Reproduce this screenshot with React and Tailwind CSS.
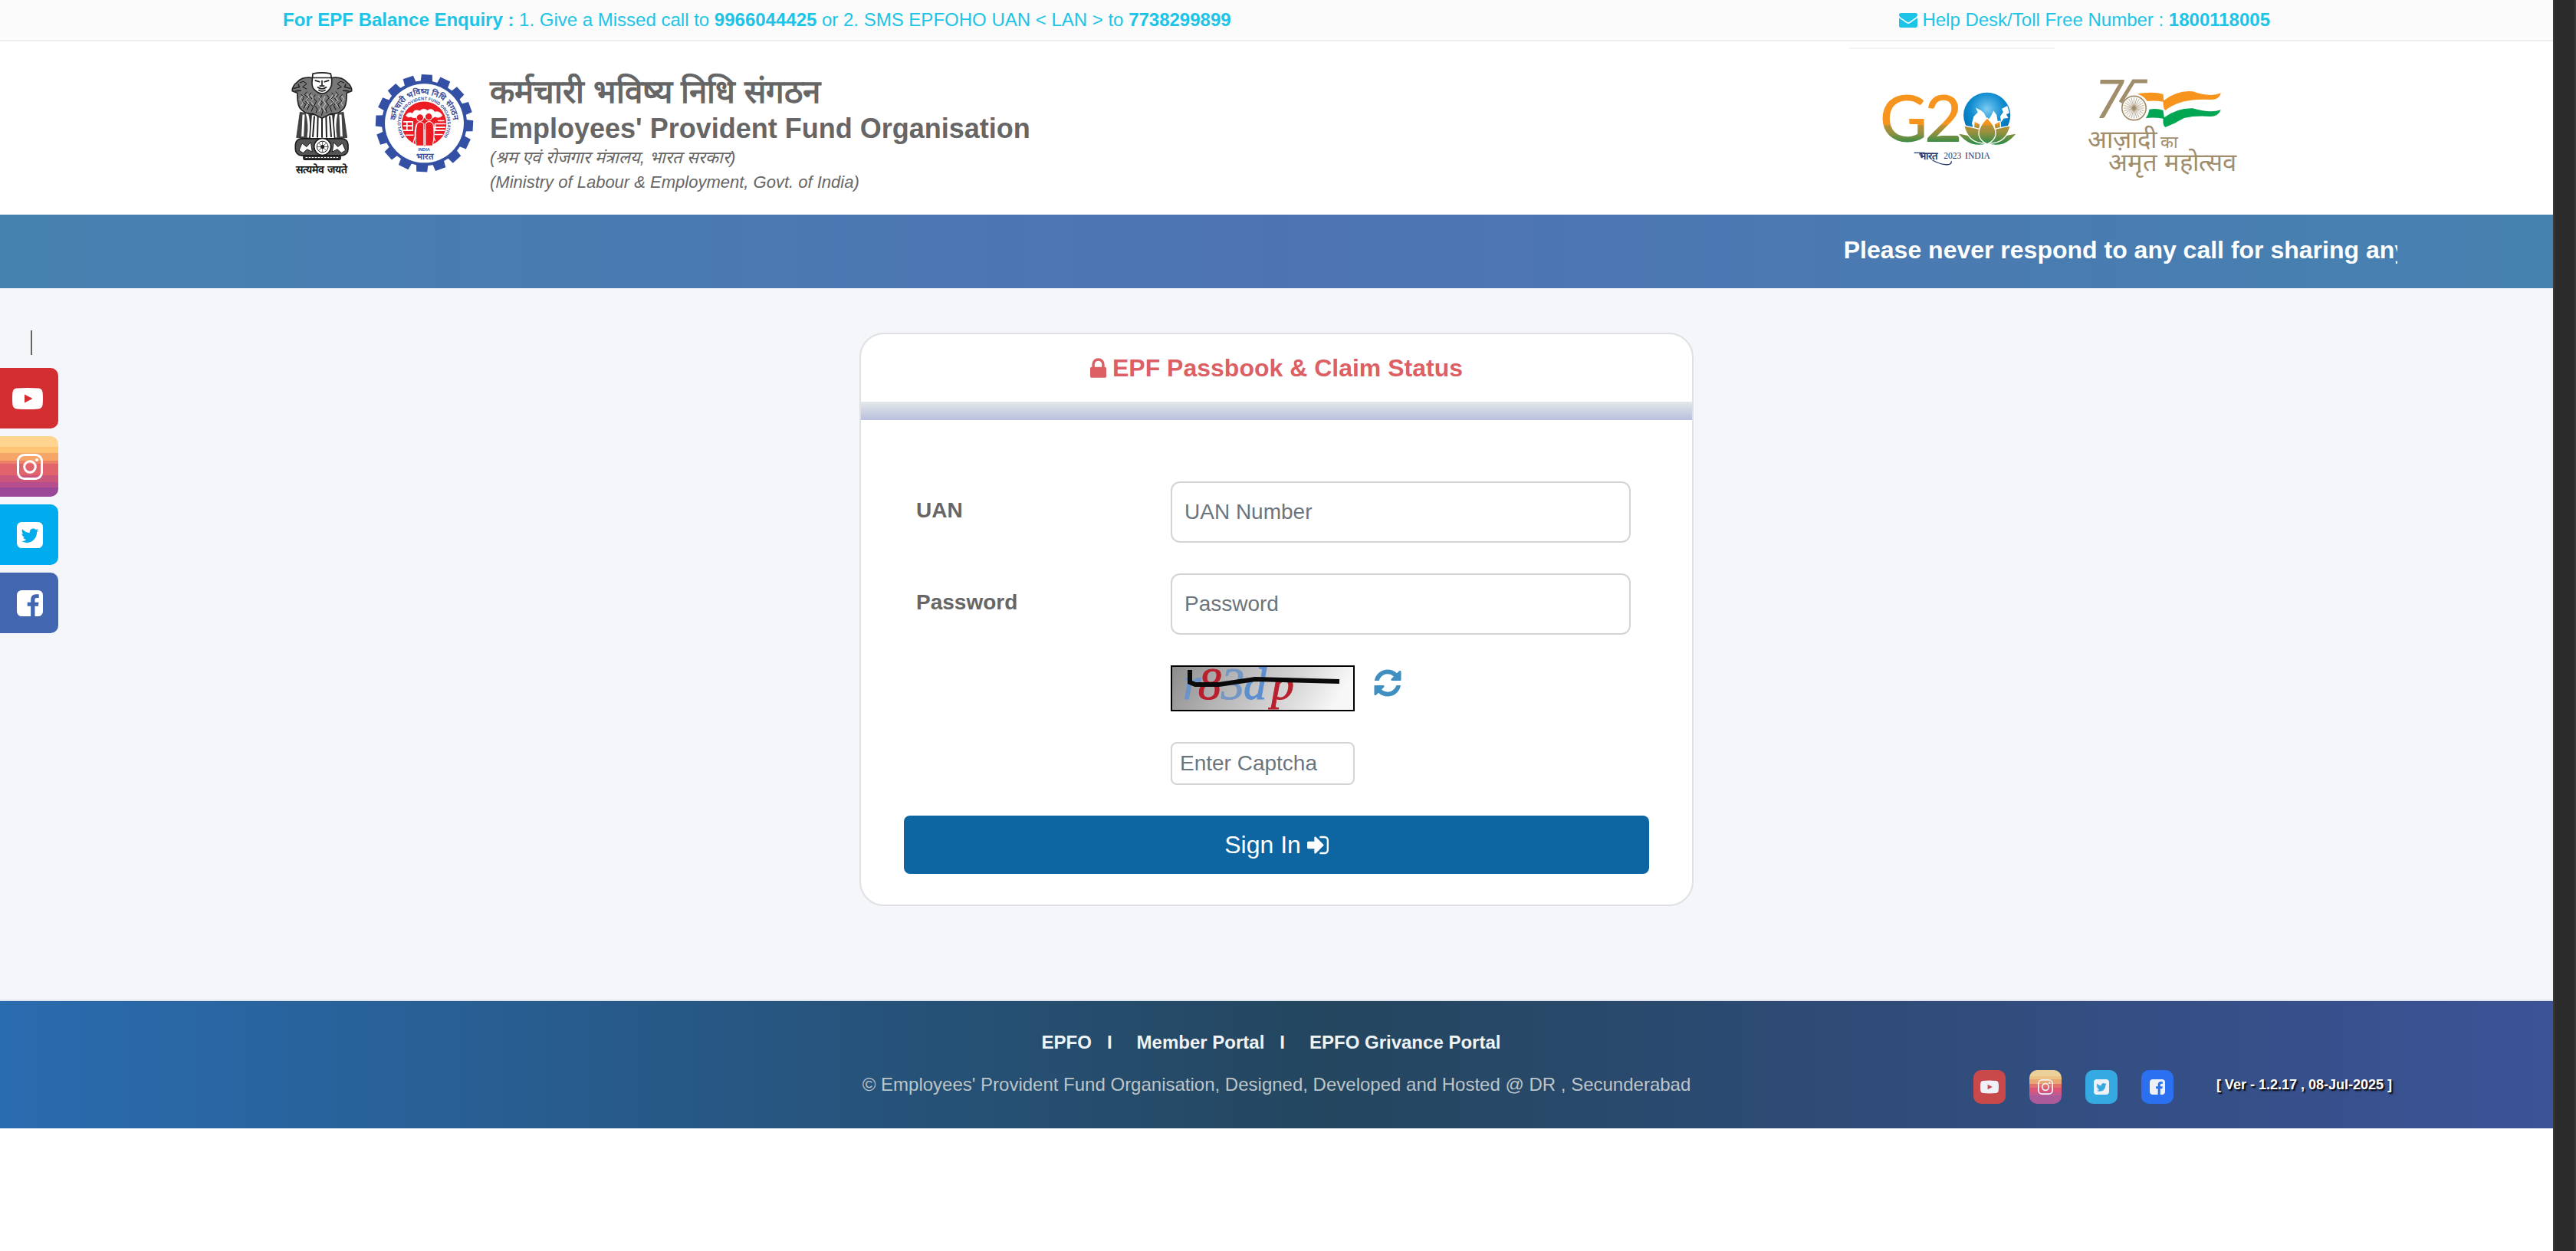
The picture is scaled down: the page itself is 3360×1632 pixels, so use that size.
import React, { useState } from "react";

const Icon = ({ d, viewBox = "0 0 1792 1792", className }) => (
  <svg viewBox={viewBox} className={className} fill="currentColor" aria-hidden="true">
    <path d={d} />
  </svg>
);

const ENVELOPE =
  "M1792 710v794q0 66-47 113t-113 47h-1472q-66 0-113-47t-47-113v-794q44 49 101 87 362 246 497 345 57 42 92.5 65.5t94.5 48 110 24.5h2q51 0 110-24.5t94.5-48 92.5-65.5q170-123 498-345 57-39 100-87zm0-294q0 79-49 151t-122 123q-376 261-468 325-10 7-42.5 31t-54 38.5-52 32.5-57.5 27-50 9h-2q-23 0-50-9t-57.5-27-52-32.5-54-38.5-42.5-31q-91-64-262-182.5t-205-142.5q-62-42-117-115.5t-55-136.5q0-78 41.5-130t118.5-52h1472q65 0 112.5 47t47.5 113z";
const LOCK =
  "M640 768h512v-192q0-106-75-181t-181-75-181 75-75 181v192zm832 96v576q0 40-28 68t-68 28h-960q-40 0-68-28t-28-68v-576q0-40 28-68t68-28h32v-192q0-184 132-316t316-132 316 132 132 316v192h32q40 0 68 28t28 68z";
const REFRESH =
  "M1639 1056q0 5-1 7-64 268-268 434.5t-478 166.5q-146 0-282.5-55t-243.5-157l-129 129q-19 19-45 19t-45-19-19-45v-448q0-26 19-45t45-19h448q26 0 45 19t19 45-19 45l-137 137q71 66 161 102t187 36q134 0 250-65t186-179q11-17 53-117 8-23 30-23h192q13 0 22.5 9.5t9.5 22.5zm25-800v448q0 26-19 45t-45 19h-448q-26 0-45-19t-19-45 19-45l138-138q-148-137-349-137-134 0-250 65t-186 179q-11 17-53 117-8 23-30 23h-199q-13 0-22.5-9.5t-9.5-22.5v-7q65-268 270-434.5t480-166.5q146 0 284 55.5t245 156.5l130-129q19-19 45-19t45 19 19 45z";
const SIGN_IN =
  "M1312 896q0 26-19 45l-544 544q-19 19-45 19t-45-19-19-45v-288h-448q-26 0-45-19t-19-45v-384q0-26 19-45t45-19h448v-288q0-26 19-45t45-19 45 19l544 544q19 19 19 45zm352-352v704q0 119-84.5 203.5t-203.5 84.5h-320q-13 0-22.5-9.5t-9.5-22.5q0-4-1-20t-.5-26.5 3-23.5 10-19.5 20.5-6.5h320q66 0 113-47t47-113v-704q0-66-47-113t-113-47h-312l-11.5-1-11.5-3-8-5.5-7-9-2-13.5q0-4-1-20t-.5-26.5 3-23.5 10-19.5 20.5-6.5h320q119 0 203.5 84.5t84.5 203.5z";
const TWITTER =
  "M1408 610q-56 25-121 34 68-40 93-117-65 38-134 51-61-66-153-66-87 0-148.5 61.5t-61.5 148.5q0 29 5 48-129-7-242-65t-192-155q-29 50-29 106 0 114 91 175-47-1-100-26v2q0 75 50 133.5t123 72.5q-29 8-51 8-13 0-39-4 21 63 74.5 104t121.5 42q-116 90-261 90-26 0-50-3 148 94 322 94 112 0 210-35.5t168-95 120.5-137 75-162 24.5-168.5q0-18-1-27 63-45 105-109zm256-194v960q0 119-84.5 203.5t-203.5 84.5h-960q-119 0-203.5-84.5t-84.5-203.5v-960q0-119 84.5-203.5t203.5-84.5h960q119 0 203.5 84.5t84.5 203.5z";
const FACEBOOK =
  "M1376 128q119 0 203.5 84.5t84.5 203.5v960q0 119-84.5 203.5t-203.5 84.5h-188v-595h199l30-232h-229v-148q0-56 23.5-84t91.5-28l122-1v-207q-63-9-178-9-136 0-217.5 80t-81.5 226v171h-200v232h200v595h-532q-119 0-203.5-84.5t-84.5-203.5v-960q0-119 84.5-203.5t203.5-84.5h960z";

const YoutubeIcon = ({ className }) => (
  <svg viewBox="0 0 40 28" className={className} fill="currentColor" aria-hidden="true">
    <path
      fillRule="evenodd"
      d="M6 0.6Q20-0.6 34 0.6Q39 1 39.6 6Q40.4 14 39.6 22Q39 27 34 27.4Q20 28.6 6 27.4Q1 27 0.4 22Q-0.4 14 0.4 6Q1 1 6 0.6ZM16 8.5V19.5L26.5 14Z"
    />
  </svg>
);

const InstagramIcon = ({ className }) => (
  <svg viewBox="0 0 34 34" className={className} fill="none" stroke="currentColor" strokeWidth="3" aria-hidden="true">
    <rect x="1.5" y="1.5" width="31" height="31" rx="8" />
    <circle cx="17" cy="17" r="7.3" />
    <circle cx="26" cy="8" r="2" fill="currentColor" stroke="none" />
  </svg>
);

const TwitterIcon = ({ className }) => <Icon d={TWITTER} viewBox="128 128 1536 1536" className={className} />;
const FacebookIcon = ({ className }) => <Icon d={FACEBOOK} viewBox="128 128 1536 1536" className={className} />;

const socials = [
  {
    name: "YouTube",
    Glyph: YoutubeIcon,
    side: "bg-[#d32f32]",
    sideIcon: "w-10 h-7",
    foot: "bg-[#c9494b]",
    footIcon: "w-6 h-[18px]",
  },
  {
    name: "Instagram",
    Glyph: InstagramIcon,
    side: "bg-[linear-gradient(#fed48e_0_18%,#fdc474_18%_28%,#f4a567_28%_41%,#ec8068_41%_46%,#e1636c_46%_65%,#cb567c_65%_76%,#b64d8e_76%_85%,#9a4798_85%)]",
    sideIcon: "w-[34px] h-[34px]",
    foot: "bg-[linear-gradient(#ecd09a_0_18%,#eec282_18%_28%,#e8a873_28%_41%,#e2706c_41%_52%,#dc5478_52%_65%,#c05a90_65%_76%,#ab5a9a_76%)]",
    footIcon: "w-5 h-5",
  },
  {
    name: "Twitter",
    Glyph: TwitterIcon,
    side: "bg-[#00abee]",
    sideIcon: "w-[34px] h-[34px]",
    foot: "bg-[#35a9e2]",
    footIcon: "w-5 h-5",
  },
  {
    name: "Facebook",
    Glyph: FacebookIcon,
    side: "bg-[#4267b0]",
    sideIcon: "w-[34px] h-[34px]",
    foot: "bg-[#2b70f0]",
    footIcon: "w-5 h-5",
  },
];

// Lion capital with the motto below
const Emblem = () => (
  <svg viewBox="28 34 240 404" className="w-20 h-[135px] overflow-visible" role="img" aria-label="State Emblem of India">
    <g fill="#fff" stroke="#222" strokeWidth="5" strokeLinejoin="round">
      <path d="M62 190L48 290L104 296L108 200ZM186 200L190 296L246 290L232 190Z" fill="#444" strokeWidth="2" />
      <path d="M88 190Q102 240 94 290M76 200L72 286M206 190Q194 240 202 290M220 200L224 286" stroke="#fff" fill="none" strokeWidth="9" />
      <path d="M106 200H190L198 294H100Z" />
      <path d="M118 206L112 288M132 206L130 290M148 210V290M164 206L166 290M178 206L184 288" strokeWidth="6" />
      <path d="M112 56Q70 50 52 72Q30 88 32 108L52 116Q50 150 60 172Q80 200 112 196L148 214L184 196Q216 200 236 172Q246 150 244 116L264 108Q266 88 244 72Q226 50 184 56Z" fill="#777" />
      <path d="M112 40Q148 32 182 40L186 62Q188 88 178 100Q164 118 148 118Q132 118 116 100Q106 88 110 62Z" />
      <path d="M112 56H184M120 66L140 72M176 66L156 72M148 66V88M130 92Q148 106 166 92M138 88H158M134 104Q148 112 162 104" fill="none" />
      <path d="M36 98L60 92L54 80M42 108L66 106M260 98L236 92L242 80M254 108L230 106" fill="none" />
    </g>
    <g fill="none" stroke="#111" strokeWidth="3">
      <path d="M66 120L78 134L68 148L84 160L76 176M90 110L80 122L94 136L84 150L98 164L90 182M106 114L96 126L110 140L100 156L114 170L106 188" />
      <path d="M122 122L114 134L126 148L118 164L130 178L124 194M148 124L138 138L150 152L140 168L152 184L146 204M166 122L176 134L164 148L174 164L162 178L168 194" />
      <path d="M186 114L196 126L182 140L192 156L178 170L186 188M202 110L212 122L198 136L208 150L194 164L202 182M228 120L216 134L226 148L210 160L218 176" />
      <path d="M60 76L76 70L88 80L72 92L88 100M236 76L220 70L208 80L224 92L208 100" />
    </g>
    <g stroke="#fff" strokeWidth="2" fill="none">
      <path d="M72 126L62 140L74 154L66 166M88 118L98 130L86 144L96 156L84 170M104 122L114 136L104 150L114 162M134 128L144 142L134 158L144 172L136 188M160 128L152 142L162 158L152 172L160 188M192 122L182 136L192 150L182 162M208 118L198 130L210 144L200 156L212 170M224 126L234 140L222 154L230 166" />
    </g>
    <g stroke="#1b1b1b" strokeWidth="5" fill="#fff">
      <rect x="44" y="294" width="206" height="66" rx="24" fill="#555" />
      <path d="M58 340L70 312L88 326L104 308L110 346L90 336L74 350ZM240 340L228 312L210 326L194 308L188 346L208 336L224 350Z" strokeWidth="3" />
      <circle cx="150" cy="326" r="33" />
      <circle cx="150" cy="326" r="22" fill="none" strokeWidth="3" />
      <path d="M150 304V348M128 326H172M134 310L166 342M166 310L134 342" strokeWidth="2" />
      <rect x="76" y="360" width="144" height="16" rx="5" fill="#333" />
      <path d="M84 368H212" stroke="#fff" strokeWidth="3" strokeDasharray="7 5" />
      <circle cx="150" cy="326" r="5" fill="#222" />
    </g>
    <text x="147" y="430" textAnchor="middle" fontSize="42" fontWeight="700" fill="#111" fontFamily="Liberation Sans, sans-serif">
      सत्यमेव जयते
    </text>
  </svg>
);

const teeth = Array.from({ length: 16 }, (_, i) => i * 22.5 + 3);

const EpfoLogo = () => (
  <svg viewBox="358 50 392 374" className="w-[131px] h-[125px] overflow-visible" role="img" aria-label="EPFO">
    <g fill="#3450a4">
      {teeth.map((a) => (
        <path key={a} d="M530 90L533 48H575L578 90Z" transform={`rotate(${a} 554 238)`} />
      ))}
      <circle cx="554" cy="238" r="166" />
    </g>
    <circle cx="554" cy="238" r="154" fill="#fff" />
    <circle cx="553" cy="240" r="87" fill="#ec1c24" />
    <g fill="none" stroke="#fff" strokeWidth="5" strokeLinejoin="round">
      <path d="M482 208Q492 190 508 200Q516 180 536 190Q550 176 566 188Q584 176 594 194Q614 188 624 208Q612 220 596 212Q582 222 566 212Q548 222 534 210Q514 222 502 212Q490 218 482 208Z" fill="#fff" strokeWidth="2" />
      <path d="M472 232H508V266H470M472 248H508M486 232V266M638 240H596V266H634M596 254H636M606 228H632" />
      <path d="M524 240Q516 264 518 290L510 316M596 240Q592 264 590 290L596 308M556 262V322M540 274L526 296M480 284H512M594 282H626" strokeWidth="4" />
    </g>
    <g fill="#ec1c24" stroke="#fff" strokeWidth="3">
      <path d="M522 326Q516 270 526 238Q538 226 552 240V326ZM558 326V240Q572 222 588 240Q596 280 586 326Z" />
      <circle cx="537" cy="216" r="14" />
      <circle cx="571" cy="212" r="14" />
    </g>
    <path id="ringOuter" d="M477 320A113 113 0 1 1 631 320" fill="none" />
    <path id="ringInner" d="M495 311A92 92 0 1 1 611 311" fill="none" />
    <g fill="#3d4f96" textAnchor="middle" fontFamily="Liberation Sans, sans-serif" fontWeight="700">
      <text fontSize="32">
        <textPath href="#ringOuter" startOffset="50%">कर्मचारी भविष्य निधि संगठन</textPath>
      </text>
      <text fontSize="17">
        <textPath href="#ringInner" startOffset="50%">EMPLOYEES PROVIDENT FUND ORGANISATION</textPath>
      </text>
      <text x="553" y="346" fontSize="17">INDIA</text>
      <text x="556" y="380" fontSize="34">भारत</text>
    </g>
  </svg>
);

const G20Logo = () => (
  <svg viewBox="103 118 529 292" className="w-44 h-[97px] overflow-visible" role="img" aria-label="G20 Bharat 2023 India">
    <defs>
      <linearGradient id="tri" gradientUnits="userSpaceOnUse" x1="0" y1="130" x2="0" y2="320">
        <stop offset="0" stopColor="#f7941d" />
        <stop offset="0.6" stopColor="#f7941d" />
        <stop offset="0.64" stopColor="#b98f35" />
        <stop offset="0.78" stopColor="#93903f" />
        <stop offset="0.86" stopColor="#6d8f42" />
        <stop offset="1" stopColor="#2f8c46" />
      </linearGradient>
      <radialGradient id="globe" cx="0.5" cy="0.36" r="0.6">
        <stop offset="0" stopColor="#7fcdf2" />
        <stop offset="0.25" stopColor="#4aaee3" />
        <stop offset="0.6" stopColor="#0f8bd0" />
        <stop offset="1" stopColor="#0071b4" />
      </radialGradient>
    </defs>
    <g fill="url(#tri)" fontFamily="Lato, sans-serif" fontWeight="500" fontSize="258">
      <text x="93" y="315">G</text>
      <text x="268" y="313">2</text>
    </g>
    <ellipse cx="514" cy="210" rx="92" ry="90" fill="url(#globe)" />
    <path
      d="M455 240L462 214L478 198L470 180L490 190L502 200L512 218L510 240L530 212L540 192L552 208L556 232L570 246L460 262ZM566 214L578 196L572 184L594 172L602 200L590 206L598 220L580 222L570 236Z"
      fill="#fff"
    />
    <g fill="url(#tri)" stroke="#fff" strokeWidth="4" strokeLinejoin="round">
      <path d="M464 232L488 244L484 268L462 260ZM566 232L542 244L546 268L568 260Z" />
      <path d="M399 280Q440 284 470 300L514 322Q480 332 452 322Q424 312 399 280ZM632 280Q590 284 560 300L514 322Q552 332 580 322Q606 312 632 280Z" />
      <path d="M424 250Q464 258 484 264Q482 300 512 320Q470 320 450 300Q430 280 424 250ZM606 250Q566 258 546 264Q548 300 518 320Q560 320 580 300Q600 280 606 250Z" />
      <path d="M515 220Q552 256 548 286Q544 310 515 322Q486 310 482 286Q478 256 515 220Z" />
    </g>
    <g fill="#24386f">
      <text x="246" y="384" fontSize="40" fontWeight="700" fontFamily="Liberation Sans, sans-serif">भारत</text>
      <text x="344" y="381" fontSize="35" fontFamily="Liberation Serif, serif">2023</text>
      <text x="428" y="381" fontSize="35" fontFamily="Liberation Serif, serif">INDIA</text>
    </g>
    <path d="M228 357H270M300 386Q340 408 366 402Q376 398 374 390" fill="none" stroke="#24386f" strokeWidth="4" />
  </svg>
);

const spokes = Array.from({ length: 24 }, (_, i) => i * 15);

const AmritLogo = () => (
  <svg viewBox="909 62 587 396" className="w-49 h-[132px] overflow-visible" role="img" aria-label="Azadi Ka Amrit Mahotsav">
    <text x="934" y="217" fontSize="207" fontStyle="italic" fill="#a08d6b" fontFamily="Lato, sans-serif">7</text>
    <path d="M1142 74H1088L1037 157" fill="none" stroke="#a08d6b" strokeWidth="15" />
    <g stroke="#a08d6b" fill="none">
      <circle cx="1090" cy="179" r="47" strokeWidth="5" />
      {spokes.map((a) => (
        <path key={a} d="M1090 179V138" strokeWidth="2" transform={`rotate(${a} 1090 179)`} />
      ))}
      <circle cx="1090" cy="179" r="8" fill="#a08d6b" />
    </g>
    <path d="M1103 124Q1160 112 1204 124L1206 150Q1260 108 1320 114Q1388 138 1430 120Q1424 146 1392 146Q1330 142 1280 154Q1240 166 1212 188Q1204 180 1204 154Q1170 148 1142 152Q1128 130 1103 124Z" fill="#f7941d" />
    <path d="M1150 184Q1180 178 1204 188L1208 216Q1260 178 1320 180Q1388 200 1430 186Q1420 212 1388 212Q1330 208 1286 218Q1250 240 1212 254Q1202 246 1204 220Q1170 214 1136 218Q1148 202 1150 184Z" fill="#00a651" />
    <g fill="#a08d6b" fontFamily="Liberation Sans, sans-serif">
      <text x="908" y="334" fontSize="98">आज़ादी</text>
      <text x="1194" y="334" fontSize="66">का</text>
      <text x="990" y="426" fontSize="98">अमृत महोत्सव</text>
    </g>
  </svg>
);

const CaptchaImage = () => (
  <svg viewBox="0 0 240 60" className="w-60 h-15" role="img" aria-label="Captcha">
    <defs>
      <linearGradient id="captchaBg" x1="0" y1="0" x2="1" y2="0.15">
        <stop offset="0" stopColor="#8b8b8b" />
        <stop offset="0.35" stopColor="#b4b4b4" />
        <stop offset="0.75" stopColor="#dadada" />
        <stop offset="1" stopColor="#f7f7f7" />
      </linearGradient>
    </defs>
    <rect x="1" y="1" width="238" height="58" fill="url(#captchaBg)" stroke="#000" strokeWidth="2" />
    <g fontFamily="Liberation Serif, serif" fontStyle="italic" fontSize="60" strokeWidth="1">
      <text x="16" y="44" fill="#6a94cb" stroke="#6a94cb">r</text>
      <text x="36" y="44" fill="#b9202e" stroke="#b9202e">8</text>
      <text x="66" y="44" fill="#7396c4" stroke="#7396c4">3</text>
      <text x="95" y="44" fill="#5b8fd0" stroke="#5b8fd0">d</text>
      <text x="131" y="44" fill="#b9202e" stroke="#b9202e">p</text>
    </g>
    <path d="M25 6V22L32 25H63L110 18L220 21" fill="none" stroke="#0a0a0a" strokeWidth="6" />
  </svg>
);

const TopBar = () => (
  <div className="bg-[#fbfbfb] border-b-2 border-[#eeeeee]">
    <div className="max-w-[2640px] mx-auto px-6 h-[52px] flex items-center justify-between text-2xl text-[#1cc4e7]">
      <p>
        <strong>For EPF Balance Enquiry :</strong> 1. Give a Missed call to <strong>9966044425</strong> or 2. SMS EPFOHO
        UAN &lt; LAN &gt; to <strong>7738299899</strong>
      </p>
      <p className="flex items-center gap-1.5">
        <Icon d={ENVELOPE} viewBox="0 256 1792 1408" className="w-6 h-[19px]" />
        <span>
          Help Desk/Toll Free Number : <strong>1800118005</strong>
        </span>
      </p>
    </div>
  </div>
);

const Header = () => (
  <header className="bg-white">
    <div className="max-w-[2640px] mx-auto px-6 flex items-start justify-between">
      <div className="flex items-start pt-10 pb-[26px] pl-[11px]">
        <Emblem />
        <div className="pt-1 pl-7 pr-5">
          <EpfoLogo />
        </div>
        <div>
          <h1 className="font-bold">
            <span className="block text-[42px] leading-[52px]">कर्मचारी भविष्य निधि संगठन</span>
            <span className="block text-4xl leading-[44px]">Employees&apos; Provident Fund Organisation</span>
          </h1>
          <p className="text-[22px] leading-8 italic">(श्रम एवं रोजगार मंत्रालय, भारत सरकार)</p>
          <p className="text-[22px] leading-8 italic">(Ministry of Labour &amp; Employment, Govt. of India)</p>
        </div>
      </div>
      <div className="flex items-start pt-2 pr-[42px]">
        <div className="w-[268px] border-t-2 border-[#f3f3f3] pt-14 pl-[43px] mr-[43px]">
          <G20Logo />
        </div>
        <div className="pt-10">
          <AmritLogo />
        </div>
      </div>
    </div>
  </header>
);

const Notice = () => (
  <div className="bg-[linear-gradient(90deg,#4682b0,#4e73b3,#4682b0)] px-[203px]">
    <div className="overflow-hidden">
      <p className="pl-[75.3%] whitespace-nowrap text-[32px] leading-[92px] pb-1 font-bold text-white">
        Please never respond to any call for sharing any
      </p>
    </div>
  </div>
);

const SocialRail = () => (
  <aside className="w-[76px] pt-[55px]">
    <div className="ml-10 w-0.5 h-8 bg-[#666]" />
    <div className="mt-[17px] flex flex-col gap-2.5">
      {socials.map(({ name, Glyph, side, sideIcon }) => (
        <a
          key={name}
          href="#"
          aria-label={name}
          className={`h-[79px] rounded-r-[10px] flex items-center justify-end pr-5 text-white ${side}`}
        >
          <Glyph className={sideIcon} />
        </a>
      ))}
    </div>
  </aside>
);

const Field = ({ id, label, type, value, onChange, placeholder }) => (
  <div className="grid grid-cols-[332px_1fr] items-center">
    <label htmlFor={id} className="pb-1 text-[28px] leading-10 font-bold">
      {label}
    </label>
    <input
      id={id}
      type={type}
      value={value}
      onChange={onChange}
      placeholder={placeholder}
      className="w-full h-20 px-4 text-[28px] bg-white border-2 border-[#d2d4d6] rounded-xl placeholder:text-[#6c757d] outline-none"
    />
  </div>
);

const LoginCard = () => {
  const [form, setForm] = useState({ uan: "", password: "", captcha: "" });

  const handleChange = (key) => (e) => setForm({ ...form, [key]: e.target.value });

  return (
    <section className="w-full max-w-[1088px] bg-white border-2 border-[#dfe0e2] rounded-[32px] overflow-hidden">
      <h2 className="h-[88px] flex items-center justify-center gap-2 text-[32px] font-bold text-[#dc5f64]">
        <Icon d={LOCK} viewBox="320 128 1152 1408" className="w-[21px] h-[26px]" />
        EPF Passbook &amp; Claim Status
      </h2>
      <div className="h-6 bg-linear-to-b from-[#e4e7ea] to-[#b8bfdd]" />
      <form onSubmit={(e) => e.preventDefault()} className="px-14 pt-20 pb-10">
        <div className="pl-4 pr-6 flex flex-col gap-10">
          <Field
            id="uan"
            label="UAN"
            type="text"
            value={form.uan}
            onChange={handleChange("uan")}
            placeholder="UAN Number"
          />
          <Field
            id="password"
            label="Password"
            type="password"
            value={form.password}
            onChange={handleChange("password")}
            placeholder="Password"
          />
          <div className="pl-[332px] flex items-start">
            <CaptchaImage />
            <button type="button" aria-label="Refresh captcha" className="ml-6 mt-1 text-[#3f8fc0]">
              <Icon d={REFRESH} viewBox="64 64 1664 1664" className="w-[38px] h-[38px]" />
            </button>
          </div>
          <div className="pl-[332px] flex">
            <input
              type="text"
              aria-label="Enter Captcha"
              value={form.captcha}
              onChange={handleChange("captcha")}
              placeholder="Enter Captcha"
              className="w-60 h-14 px-2.5 text-[28px] bg-white border-2 border-[#d2d4d6] rounded-lg placeholder:text-[#6c757d] outline-none"
            />
          </div>
        </div>
        <button
          type="submit"
          className="mt-10 w-full h-[76px] rounded-lg bg-[#0d66a1] text-white text-[32px] flex items-center justify-center gap-2"
        >
          Sign In
          <Icon d={SIGN_IN} viewBox="128 256 1536 1280" className="w-7 h-[25px]" />
        </button>
      </form>
    </section>
  );
};

const Footer = () => (
  <footer className="bg-[linear-gradient(90deg,#2a6cb0_0%,#24465f_52%,#3c5397_100%)] pt-9 pb-8">
    <nav className="flex justify-center pr-3.5 text-2xl leading-9 font-bold text-[#eef3f5]">
      <a href="#">EPFO</a>
      <span className="ml-5 mr-8">I</span>
      <a href="#">Member Portal</a>
      <span className="ml-5 mr-8">I</span>
      <a href="#">EPFO Grivance Portal</a>
    </nav>
    <div className="mt-[18px] grid grid-cols-[1fr_auto_1fr] items-start">
      <span />
      <p className="text-2xl leading-[38px] text-[#bcc5c8]">
        © Employees&apos; Provident Fund Organisation, Designed, Developed and Hosted @ DR , Secunderabad
      </p>
      <div className="flex justify-end pr-[210px]">
        <div className="flex gap-[31px]">
          {socials.map(({ name, Glyph, foot, footIcon }) => (
            <a
              key={name}
              href="#"
              aria-label={name}
              className={`w-[42px] h-11 rounded-[10px] flex items-center justify-center text-[#eef1f8] ${foot}`}
            >
              <Glyph className={footIcon} />
            </a>
          ))}
        </div>
        <p className="ml-14 text-lg leading-[38px] font-bold text-white [text-shadow:2px_2px_2px_#000]">
          [ Ver - 1.2.17 , 08-Jul-2025 ]
        </p>
      </div>
    </div>
  </footer>
);

const App = () => (
  <div className="min-h-screen flex bg-white text-[#666] font-['Liberation_Sans',Arial,sans-serif]">
    <div className="flex-1 min-w-0">
      <TopBar />
      <Header />
      <Notice />
      <main className="flex items-start bg-[#f5f6fa] border-b-2 border-[#dfe4ec] pr-[76px]">
        <SocialRail />
        <div className="flex-1 flex justify-center pt-[58px] pb-[122px]">
          <LoginCard />
        </div>
      </main>
      <Footer />
    </div>
    <div className="w-[30px] bg-[#2b2b2b] border-x-2 border-[#393939]" />
  </div>
);

export default App;
